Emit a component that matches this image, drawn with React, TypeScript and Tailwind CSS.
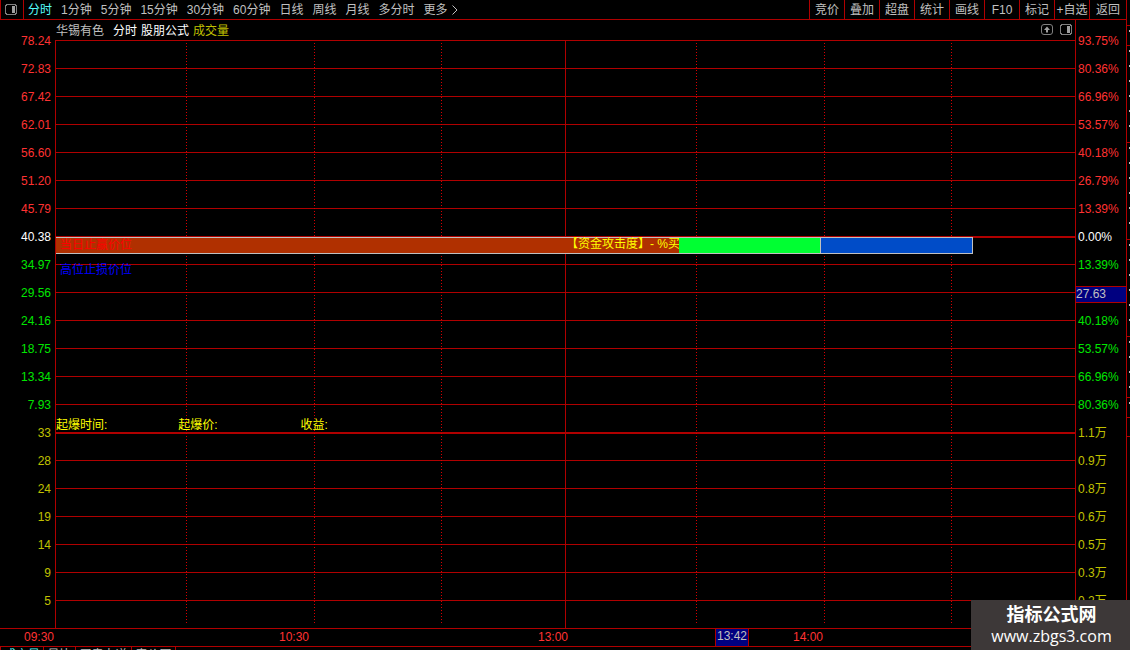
import type { ReactNode } from 'react';

const periods = ['1分钟', '5分钟', '15分钟', '30分钟', '60分钟', '日线', '周线', '月线', '多分时'];
const tools = ['竞价', '叠加', '超盘', '统计', '画线', 'F10', '标记', '+自选'];

const RED = 'text-[#ff3232]';
const WHITE = 'text-white';
const GREEN = 'text-[#00e600]';
const YELLOW = 'text-[#c0c000]';

type Level = { left: string; right: string; tone: string };

const levels: Level[] = [
  { left: '78.24', right: '93.75%', tone: RED },
  { left: '72.83', right: '80.36%', tone: RED },
  { left: '67.42', right: '66.96%', tone: RED },
  { left: '62.01', right: '53.57%', tone: RED },
  { left: '56.60', right: '40.18%', tone: RED },
  { left: '51.20', right: '26.79%', tone: RED },
  { left: '45.79', right: '13.39%', tone: RED },
  { left: '40.38', right: '0.00%', tone: WHITE },
  { left: '34.97', right: '13.39%', tone: GREEN },
  { left: '29.56', right: '27.63', tone: GREEN },
  { left: '24.16', right: '40.18%', tone: GREEN },
  { left: '18.75', right: '53.57%', tone: GREEN },
  { left: '13.34', right: '66.96%', tone: GREEN },
  { left: '7.93', right: '80.36%', tone: GREEN },
  { left: '33', right: '1.1万', tone: YELLOW },
  { left: '28', right: '0.9万', tone: YELLOW },
  { left: '24', right: '0.8万', tone: YELLOW },
  { left: '19', right: '0.6万', tone: YELLOW },
  { left: '14', right: '0.5万', tone: YELLOW },
  { left: '9', right: '0.3万', tone: YELLOW },
  { left: '5', right: '0.2万', tone: YELLOW },
];

const CURSOR_ROW = 9;
const ZERO_ROW = 7;
const VOLUME_ROW = 14;

const columns = ['dotted', 'dotted', 'dotted', 'solid', 'dotted', 'dotted', 'dotted', 'none'];

function PanelIcon() {
  return (
    <svg className="h-3 w-3" viewBox="0 0 12 12" fill="none" shapeRendering="crispEdges" aria-hidden="true">
      <path d="M1.5 .5h9v1h1v8h-1v1h-9v-1h-1v-8h1z" stroke="#808080" />
      <path d="M7 2h3v7H7z" fill="#a0a0a0" />
    </svg>
  );
}

function UpIcon() {
  return (
    <svg className="h-3 w-3" viewBox="0 0 12 12" fill="none" aria-hidden="true">
      <rect x="0.5" y="0.5" width="11" height="10" rx="2.5" stroke="#808080" />
      <path d="M6 2.5 9 6H7v2.5H5V6H3z" fill="#a0a0a0" />
    </svg>
  );
}

function TopBar() {
  return (
    <header className="flex h-5 shrink-0 border-b border-[#b00000] leading-[18px] text-[#c0c0c0]">
      <button type="button" aria-label="侧栏" className="flex w-6 items-center justify-center border-x border-[#b00000] pr-0.5">
        <PanelIcon />
      </button>
      <nav className="flex flex-1 gap-[9px] pl-1" aria-label="周期">
        <button type="button" className="text-[#54fcfc]">分时</button>
        {periods.map((p) => (
          <button type="button" key={p}>{p}</button>
        ))}
        <button type="button" className="flex items-center gap-1">
          更多
          <svg className="h-[10px] w-[6px]" viewBox="0 0 6 10" fill="none" stroke="#c0c0c0" aria-hidden="true">
            <path d="M.5 .5 5 5 .5 9.5" />
          </svg>
        </button>
      </nav>
      <nav className="flex" aria-label="工具">
        {tools.map((t) => (
          <button type="button" key={t} className="w-[35px] whitespace-nowrap border-l border-[#b00000] text-center">
            {t}
          </button>
        ))}
        <button type="button" className="w-[37px] border-l border-[#b00000] text-center">返回</button>
      </nav>
    </header>
  );
}

function Legend() {
  return (
    <div className="flex h-5 items-center justify-between pl-px pr-[3px] leading-5">
      <p className="flex pt-0.5 text-white">
        <span className="mr-[9px] text-[#c0c0c0]">华锡有色</span>
        <span className="mr-1">分时</span>
        <span className="mr-1">股朋公式</span>
        <span className="text-[#c0c000]">成交量</span>
      </p>
      <div className="flex gap-[7px]">
        <button type="button" aria-label="展开"><UpIcon /></button>
        <button type="button" aria-label="面板"><PanelIcon /></button>
      </div>
    </div>
  );
}

function Layer({ children }: { children: ReactNode }) {
  return <div className="col-start-1 row-start-1 min-w-0">{children}</div>;
}

function Plot() {
  return (
    <div className="grid flex-1 grid-cols-1 border-l border-[#b00000]">
      <Layer>
        {levels.map((l, i) => (
          <div
            key={i}
            className={
              i === ZERO_ROW || i === VOLUME_ROW
                ? 'h-7 border-t-2 border-[#b00000]'
                : 'h-7 border-t border-[#b00000]'
            }
          />
        ))}
      </Layer>
      <Layer>
        <div className="grid h-full grid-cols-[131fr_128fr_127fr_124fr_132fr_128fr_127fr_123fr]">
          {columns.map((c, i) => (
            <div key={i} className="flex justify-end">
              {c === 'solid' && <i className="w-px bg-[#b00000]" />}
              {c === 'dotted' && (
                <i className="my-[3px] w-px bg-[repeating-linear-gradient(to_bottom,#d80000_0px_1px,transparent_1px_3px)]" />
              )}
            </div>
          ))}
        </div>
      </Layer>
      <Layer>
        <div className="flex flex-col leading-[14px]">
          <div className="mt-[197px] flex h-[17px] w-[90%] border-y border-r border-[#c0c0c0]">
            <div className="flex w-[68%] items-start justify-between whitespace-nowrap bg-[#b03000]">
              <span className="pl-1 leading-[14px] text-[#ff0000]">当日止赢价位</span>
              <span className="-mr-px leading-3 text-[#ffff00]">【资金攻击度】- %买</span>
            </div>
            <div className="w-[15.5%] border-r border-[#c0c0c0] bg-[#00ff32]" />
            <div className="flex-1 bg-[#004cc8]" />
          </div>
          <p className="mt-[9px] pl-1 text-[#0000ff]">高位止损价位</p>
          <div className="mt-[141px] grid grid-cols-[12%_12%_1fr] text-[#ffff00]">
            <span>起爆时间:</span>
            <span>起爆价:</span>
            <span>收益:</span>
          </div>
        </div>
      </Layer>
    </div>
  );
}

function TimeAxis() {
  return (
    <div className="relative grid h-[19px] shrink-0 grid-cols-[54fr_255fr_259fr_255fr_303fr] border-y border-[#b00000] text-right leading-[17px] text-[#ff3232]">
      <span>09:30</span>
      <span>10:30</span>
      <span>13:00</span>
      <span>14:00</span>
      <span className="absolute -top-px left-[63.5%] h-[19px] border border-[#b00000] bg-[#000080] px-px leading-[15px] text-[#c0c0c0]">
        13:42
      </span>
    </div>
  );
}

function BottomTabs() {
  return (
    <div className="flex h-[3px] shrink-0 overflow-hidden leading-[14px] text-[#c0c0c0]">
      <button type="button" className="h-4 w-11 border-x border-[#b00000] text-[#54fcfc]">成交量</button>
      <button type="button" className="h-4 w-8 border-r border-[#b00000]">量比</button>
      <button type="button" className="h-4 w-14 border-r border-[#b00000]">买卖力道</button>
      <button type="button" className="h-4 w-11 border-r border-[#b00000]">竞价图</button>
    </div>
  );
}

function EdgeStrip() {
  const blocks = ['h-[26px]', 'h-5', 'h-[97px]', 'h-[97px]', 'h-[97px]', 'h-[61px]', 'h-5', 'h-[19px]'];
  return (
    <aside className="w-1 shrink-0 overflow-hidden border-l border-[#b00000]">
      {blocks.map((h, i) => (
        <div key={i} className={`${h} flex justify-end border-b border-[#b00000]`}>
          {i > 0 && i < 7 && (
            <i className="my-1 w-px bg-[repeating-linear-gradient(to_bottom,#c0c0c0_0px_2px,transparent_2px_15px)]" />
          )}
        </div>
      ))}
    </aside>
  );
}

export default function App() {
  return (
    <main className="relative flex h-screen overflow-hidden bg-black font-['Liberation_Sans','Noto_Sans_CJK_SC',sans-serif] text-xs">
      <div className="flex min-w-0 flex-1 flex-col">
        <TopBar />
        <div className="flex h-[608px] shrink-0">
          <div className="w-[55px] shrink-0 pr-1 pt-[7px] text-right leading-7">
            {levels.map((l, i) => (
              <div key={i} className={`h-7 ${l.tone}`}>{l.left}</div>
            ))}
          </div>
          <div className="flex min-w-0 flex-1 flex-col">
            <Legend />
            <Plot />
          </div>
          <div className="w-[51px] shrink-0 border-l border-[#b00000] pt-[7px] leading-7">
            {levels.map((l, i) =>
              i === CURSOR_ROW ? (
                <div key={i} className="flex h-7 items-center pt-0.5">
                  <span className="h-[17px] w-full border-y border-[#b00000] bg-[#000080] leading-[15px] text-[#c0c0c0]">
                    {l.right}
                  </span>
                </div>
              ) : (
                <div key={i} className={`h-7 pl-0.5 ${l.tone}`}>{l.right}</div>
              ),
            )}
          </div>
        </div>
        <TimeAxis />
        <BottomTabs />
      </div>
      <EdgeStrip />
      <a
        href="#"
        className="absolute bottom-0 right-0 flex h-[50px] w-[159px] flex-col items-center bg-[#3d3838] pl-0.5 pt-1 text-white"
      >
        <strong className="text-lg leading-[22px]">指标公式网</strong>
        <span className="font-['Open_Sans',sans-serif] text-base leading-5">www.zbgs3.com</span>
      </a>
    </main>
  );
}
